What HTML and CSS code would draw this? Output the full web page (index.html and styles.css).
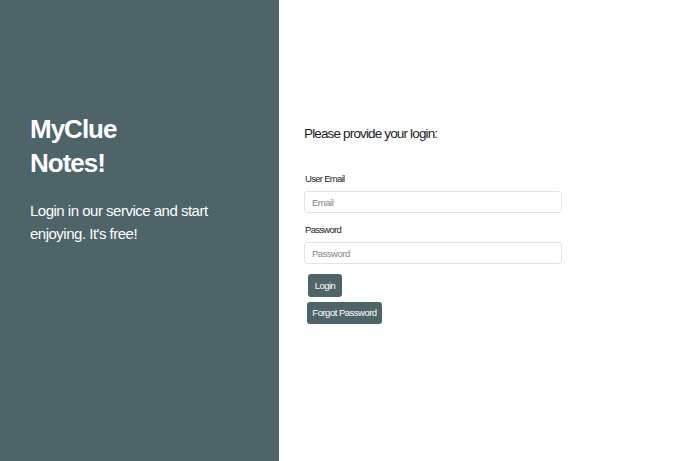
FILE: index.html
```html
<!DOCTYPE html>
<html lang="en">
<head>
<meta charset="utf-8">
<title>MyClue Notes - Login</title>
<link rel="stylesheet" href="styles.css">
</head>
<body>
<div class="page">
  <section class="hero">
    <h1 class="hero-title">MyClue<br>Notes!</h1>
    <p class="hero-text">Login in our service and start<br>enjoying. It's free!</p>
  </section>
  <main class="panel">
    <h2 class="panel-title">Please provide your login:</h2>
    <form class="login-form">
      <label class="field-label" for="email">User Email</label>
      <input class="field-input" id="email" type="email" placeholder="Email">
      <label class="field-label field-label-second" for="password">Password</label>
      <input class="field-input" id="password" type="password" placeholder="Password">
      <button class="btn btn-login" type="button">Login</button>
      <button class="btn btn-forgot" type="button">Forgot Password</button>
    </form>
  </main>
</div>
</body>
</html>
```

FILE: styles.css
```css
html, body {
  margin: 0;
  padding: 0;
  background: #ffffff;
}

.page {
  display: flex;
  height: 461px;
  width: 692px;
  overflow: hidden;
}

.hero {
  width: 279px;
  flex: 0 0 279px;
  background: #4d6469;
  color: #ffffff;
  padding: 112px 0 0 30px;
  box-sizing: border-box;
  font-family: "Liberation Sans", Arial, sans-serif;
}

.hero-title {
  margin: 0;
  font-size: 26px;
  line-height: 34px;
  font-weight: 700;
  letter-spacing: -1px;
}

.hero-text {
  margin: 19px 0 0;
  font-size: 15px;
  line-height: 23px;
  letter-spacing: -0.5px;
}

.panel {
  flex: 1;
  padding: 124px 0 0 25px;
  box-sizing: border-box;
  font-family: "Liberation Sans", Arial, sans-serif;
  color: #212529;
}

.panel-title {
  margin: 0;
  font-size: 13.5px;
  line-height: 20px;
  font-weight: 400;
  letter-spacing: -0.85px;
}

.login-form {
  display: flex;
  flex-direction: column;
  align-items: flex-start;
  margin-top: 27px;
}

.field-label {
  font-size: 9.5px;
  line-height: 15px;
  letter-spacing: -0.7px;
  margin: 0 0 5px 1px;
}

.field-label-second {
  margin-top: 9px;
}

.field-input {
  width: 258px;
  height: 22px;
  box-sizing: border-box;
  border: 1px solid #e1e3e6;
  border-radius: 3px;
  padding: 0 7px;
  font-family: inherit;
  font-size: 9.5px;
  letter-spacing: -0.5px;
  color: #495057;
  background: #ffffff;
  outline: none;
}

.field-input::placeholder {
  color: #80858a;
}

.btn {
  font-family: inherit;
  font-size: 9.5px;
  line-height: 12px;
  letter-spacing: -0.5px;
  white-space: nowrap;
  color: #ffffff;
  background: #4d6469;
  border: none;
  border-radius: 3px;
  cursor: pointer;
  box-sizing: border-box;
  text-align: center;
}

.btn-login {
  margin: 10px 0 0 4px;
  width: 34px;
  height: 23px;
  padding: 0;
}

.btn-forgot {
  margin: 5px 0 0 3px;
  width: 75px;
  height: 22px;
  padding: 0;
}
```
